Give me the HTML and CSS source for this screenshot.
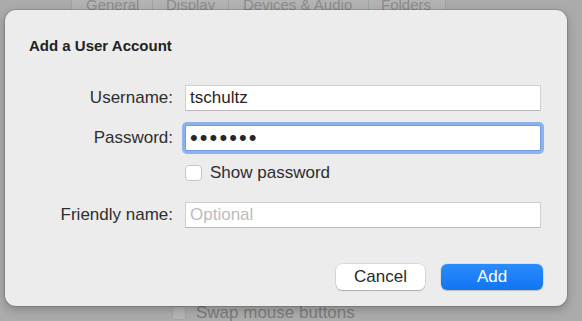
FILE: index.html
```html
<!DOCTYPE html>
<html lang="en">

<head>
    <meta charset="UTF-8">
    <meta name="viewport" content="width=device-width, initial-scale=1.0">
    <title>Add a User Account</title>
    <link rel="stylesheet" href="styles.css">
</head>

<body>
    <div class="window">
        <div class="tabs">
            <div class="tab tab-general">General</div>
            <div class="tab tab-display">Display</div>
            <div class="tab tab-devices">Devices &amp; Audio</div>
            <div class="tab tab-folders">Folders</div>
        </div>
        <div class="window-body"></div>
        <div class="bottom-row">
            <span class="bg-check"></span>
            <span class="bg-label">Swap mouse buttons</span>
        </div>
    </div>

    <div class="sheet">
        <h2 class="sheet-title">Add a User Account</h2>
        <form class="account-form">
            <label class="field-label" for="username">Username:</label>
            <input class="field" id="username" type="text" value="tschultz">

            <label class="field-label" for="password">Password:</label>
            <input class="field field-password focused" id="password" type="password" value="1234567">

            <span></span>
            <label class="check-row">
                <input type="checkbox" class="check">
                <span>Show password</span>
            </label>

            <label class="field-label label-friendly" for="friendly">Friendly name:</label>
            <input class="field field-friendly" id="friendly" type="text" placeholder="Optional">
        </form>
        <div class="buttons">
            <button type="button" class="btn btn-cancel">Cancel</button>
            <button type="submit" class="btn btn-add">Add</button>
        </div>
    </div>
</body>

</html>
```

FILE: styles.css
```css
body {
    margin: 0;
    width: 582px;
    height: 321px;
    overflow: hidden;
    background-color: #ababab;
    font-family: "Liberation Sans", Arial, sans-serif;
}

/* the preferences window behind the sheet */
.window {
    display: flex;
    flex-direction: column;
    height: 321px;
}

.tabs {
    display: flex;
    margin-left: 71px;
    width: 375px;
    height: 10px;
    overflow: hidden;
    background-color: #b3b3b3;
}

.tab {
    border-left: 1px solid #a2a2a2;
    color: #8c8c8c;
    font-size: 15px;
    line-height: 16px;
    margin-top: -3px;
    white-space: nowrap;
    box-sizing: border-box;
}

.tab-general { width: 81px; padding-left: 14px; }
.tab-display { width: 76px; padding-left: 13px; }
.tab-devices { width: 140px; padding-left: 14px; }
.tab-folders { width: 78px; padding-left: 12px; border-right: 1px solid #a2a2a2; }

.window-body {
    flex: 1;
}

.bottom-row {
    display: flex;
    align-items: center;
    gap: 10px;
    height: 15px;
    padding-left: 172px;
    padding-bottom: 1px;
}

.bg-check {
    width: 14px;
    height: 14px;
    border-radius: 3px;
    background-color: #b4b4b4;
    border: 1px solid #a4a4a4;
    box-sizing: border-box;
}

.bg-label {
    color: #7c7c7c;
    font-size: 17px;
}

/* the sheet */
.sheet {
    position: absolute;
    left: 5px;
    top: 10px;
    width: 562px;
    height: 296px;
    box-sizing: border-box;
    padding: 0 24px;
    background-color: #ececec;
    border-radius: 11px;
    box-shadow: 0 0 0 1px rgba(0, 0, 0, 0.12), 0 3px 10px rgba(0, 0, 0, 0.25);
}

.sheet-title {
    margin: 26px 0 0 0;
    font-size: 15px;
    line-height: 20px;
    font-weight: bold;
    color: #222;
}

.account-form {
    display: grid;
    grid-template-columns: 144px 356px;
    column-gap: 12px;
    row-gap: 14px;
    align-items: center;
    margin-top: 29px;
}

.field-label {
    text-align: right;
    font-size: 17px;
    color: #2e2e2e;
}

.field {
    height: 26px;
    margin: 0;
    padding: 0 4px;
    box-sizing: border-box;
    border: 1px solid #cfcfcf;
    border-bottom-color: #b9b9b9;
    background-color: #fff;
    font-family: "Liberation Sans", Arial, sans-serif;
    font-size: 17px;
    color: #262626;
    outline: none;
}

.field::placeholder {
    color: #bcbcbc;
}

.field-password {
    font-size: 22px;
    letter-spacing: 2.1px;
}

.focused {
    border-color: #6f9de0;
    border-radius: 2px;
    box-shadow: 0 0 0 3px #8db3ec;
}

.check-row {
    display: flex;
    align-items: center;
    gap: 8px;
    margin-top: -2px;
    font-size: 17px;
    color: #2e2e2e;
}

.check {
    appearance: none;
    margin: 0;
    width: 17px;
    height: 16px;
    border: 1px solid #c6c6c6;
    border-radius: 4px;
    background-color: #fff;
}

.label-friendly,
.field-friendly {
    margin-top: 5px;
}

.buttons {
    display: flex;
    justify-content: flex-end;
    gap: 16px;
    margin-top: 36px;
}

.btn {
    height: 26px;
    border-radius: 6px;
    border: none;
    font-family: "Liberation Sans", Arial, sans-serif;
    font-size: 17px;
    cursor: pointer;
}

.btn-cancel {
    width: 89px;
    background-color: #fff;
    color: #2a2a2a;
    box-shadow: 0 0 0 0.5px rgba(0, 0, 0, 0.15), 0 1px 1px rgba(0, 0, 0, 0.2);
}

.btn-add {
    width: 102px;
    background: linear-gradient(#2b8bfb, #1075f3);
    color: #fff;
    box-shadow: 0 0 0 0.5px rgba(0, 0, 0, 0.1), 0 1px 1px rgba(0, 0, 0, 0.15);
}
```
